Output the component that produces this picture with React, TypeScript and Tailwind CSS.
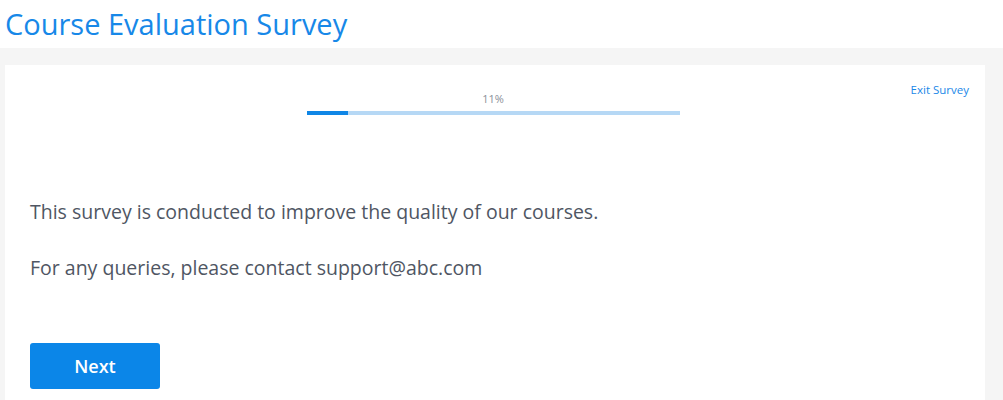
export default function App() {
  const progress = 11

  return (
    <div className="h-[400px] w-full overflow-hidden bg-[#f5f5f5] font-['Open_Sans',sans-serif]">
      <header className="h-[48px] bg-white pl-[5px] pt-[6px]">
        <h1 className="text-[29px] leading-[36px] text-[#1788e8]">Course Evaluation Survey</h1>
      </header>

      <div className="ml-[5px] mr-[18px] mt-[17px] h-[400px] bg-white px-[25px] pt-[24px]">
        <div className="relative">
          <div className="mx-auto w-[373px] -translate-x-[2px]">
            <div className="pt-[2px] text-center text-[11px] leading-[16px] text-[#8a8f99]">{progress}%</div>
            <div className="mt-[4px] h-[4px] bg-[#b6d8f5]">
              <div className="h-full bg-[#0f86e6]" style={{ width: `${progress}%` }} />
            </div>
          </div>
          <a className="absolute right-[-9px] top-[-8px] text-[11.5px] text-[#1a88e8]" href="#">
            Exit Survey
          </a>
        </div>

        <div className="mt-[84px] text-[19.5px] leading-[26px] text-[#4f5663]">
          <p>This survey is conducted to improve the quality of our courses.</p>
          <p className="mt-[30px]">For any queries, please contact support@abc.com</p>
        </div>

        <button className="mt-[62px] h-[46px] w-[130px] rounded-[3px] bg-[#0b86e8] text-[18px] font-semibold text-white">
          Next
        </button>
      </div>
    </div>
  )
}
